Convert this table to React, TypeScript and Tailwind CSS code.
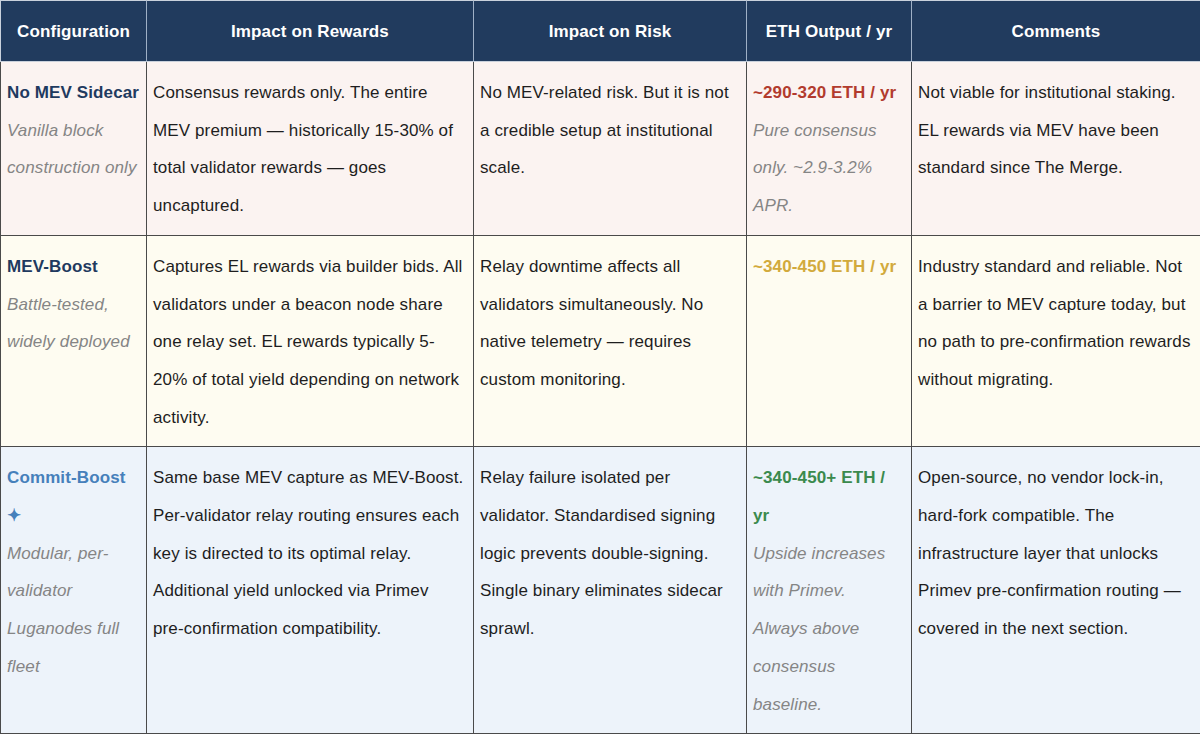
import React from "react";

const font = { fontFamily: '"Liberation Sans", Arial, Helvetica, sans-serif' };

function Lines({ lines, className = "" }: { lines: string[]; className?: string }) {
  return (
    <div className={className}>
      {lines.map((l, i) => (
        <div key={i} className="whitespace-nowrap">
          {l}
        </div>
      ))}
    </div>
  );
}

type Row = {
  bg: string;
  config: React.ReactNode;
  rewards: string[];
  risk: string[];
  eth: React.ReactNode;
  comments: string[];
};

const gray = "italic text-[#858585]";

const rows: Row[] = [
  {
    bg: "bg-[#fbf3f1]",
    config: (
      <>
        <Lines className="font-bold text-[#1f3a5f]" lines={["No MEV Sidecar"]} />
        <Lines className={gray} lines={["Vanilla block", "construction only"]} />
      </>
    ),
    rewards: [
      "Consensus rewards only. The entire",
      "MEV premium — historically 15-30% of",
      "total validator rewards — goes",
      "uncaptured.",
    ],
    risk: ["No MEV-related risk. But it is not", "a credible setup at institutional", "scale."],
    eth: (
      <>
        <Lines className="font-bold text-[#b23b2e]" lines={["~290-320 ETH / yr"]} />
        <Lines className={gray} lines={["Pure consensus", "only. ~2.9-3.2%", "APR."]} />
      </>
    ),
    comments: [
      "Not viable for institutional staking.",
      "EL rewards via MEV have been",
      "standard since The Merge.",
    ],
  },
  {
    bg: "bg-[#fefcf1]",
    config: (
      <>
        <Lines className="font-bold text-[#1f3a5f]" lines={["MEV-Boost"]} />
        <Lines className={gray} lines={["Battle-tested,", "widely deployed"]} />
      </>
    ),
    rewards: [
      "Captures EL rewards via builder bids. All",
      "validators under a beacon node share",
      "one relay set. EL rewards typically 5-",
      "20% of total yield depending on network",
      "activity.",
    ],
    risk: [
      "Relay downtime affects all",
      "validators simultaneously. No",
      "native telemetry — requires",
      "custom monitoring.",
    ],
    eth: <Lines className="font-bold text-[#d2aa3c]" lines={["~340-450 ETH / yr"]} />,
    comments: [
      "Industry standard and reliable. Not",
      "a barrier to MEV capture today, but",
      "no path to pre-confirmation rewards",
      "without migrating.",
    ],
  },
  {
    bg: "bg-[#edf3fa]",
    config: (
      <>
        <Lines className="font-bold text-[#4680bb]" lines={["Commit-Boost", "✦"]} />
        <Lines className={gray} lines={["Modular, per-", "validator", "Luganodes full", "fleet"]} />
      </>
    ),
    rewards: [
      "Same base MEV capture as MEV-Boost.",
      "Per-validator relay routing ensures each",
      "key is directed to its optimal relay.",
      "Additional yield unlocked via Primev",
      "pre-confirmation compatibility.",
    ],
    risk: [
      "Relay failure isolated per",
      "validator. Standardised signing",
      "logic prevents double-signing.",
      "Single binary eliminates sidecar",
      "sprawl.",
    ],
    eth: (
      <>
        <Lines className="font-bold text-[#3b8a4d]" lines={["~340-450+ ETH /", "yr"]} />
        <Lines
          className={gray}
          lines={["Upside increases", "with Primev.", "Always above", "consensus", "baseline."]}
        />
      </>
    ),
    comments: [
      "Open-source, no vendor lock-in,",
      "hard-fork compatible. The",
      "infrastructure layer that unlocks",
      "Primev pre-confirmation routing —",
      "covered in the next section.",
    ],
  },
];

const headers = ["Configuration", "Impact on Rewards", "Impact on Risk", "ETH Output / yr", "Comments"];

export default function App() {
  const cell =
    "border-l border-b border-[#4a4a4a] pl-[6px] pr-[3px] pt-[12px] pb-[10px] text-[17px] leading-[37.7px] text-[#1e1e1e] tracking-[0.12px] overflow-hidden";
  return (
    <div className="w-[1200px] h-[736px] overflow-hidden bg-white" style={font}>
      <div className="grid grid-cols-[146px_327px_273px_165px_289px]">
        {headers.map((h, i) => (
          <div
            key={h}
            className={`h-[62px] pt-[2px] flex items-center justify-center bg-[#213b5e] border-t border-b border-t-[#c9d1dc] border-b-[#c9d1dc] text-white font-bold text-[17px] tracking-[0.12px] ${
              i === 0 ? "border-l border-l-[#c9d1dc]" : "border-l border-l-[#9fb0c6]"
            }`}
          >
            {h}
          </div>
        ))}
        {rows.map((r, ri) => (
          <React.Fragment key={ri}>
            <div className={`${cell} ${r.bg}`}>{r.config}</div>
            <div className={`${cell} ${r.bg}`}>
              <Lines lines={r.rewards} />
            </div>
            <div className={`${cell} ${r.bg}`}>
              <Lines lines={r.risk} />
            </div>
            <div className={`${cell} ${r.bg}`}>{r.eth}</div>
            <div className={`${cell} ${r.bg}`}>
              <Lines lines={r.comments} />
            </div>
          </React.Fragment>
        ))}
      </div>
    </div>
  );
}
